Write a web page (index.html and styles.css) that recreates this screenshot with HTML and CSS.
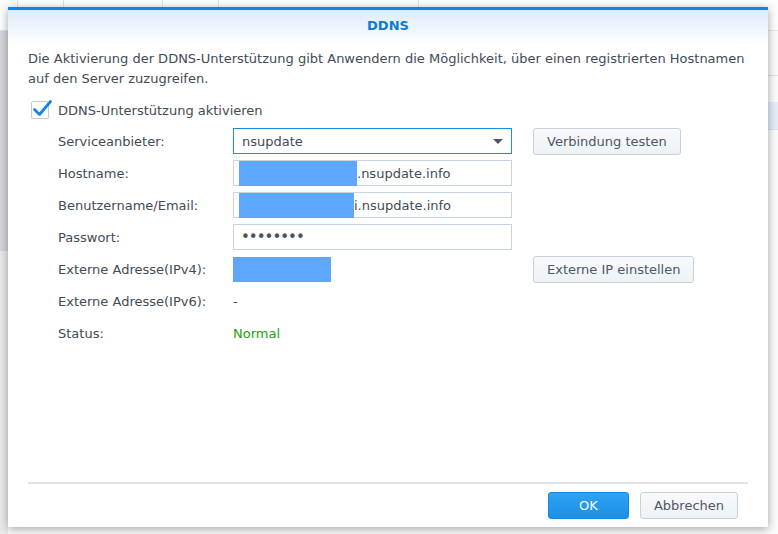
FILE: index.html
```html
<!DOCTYPE html>
<html lang="de">
<head>
<meta charset="utf-8">
<title>DDNS</title>
<link rel="stylesheet" href="styles.css">
</head>
<body>
<div class="backdrop">
  <div class="bg-head">
    <span class="bg-col c1"></span><span class="bg-col c2"></span><span class="bg-col c3"></span><span class="bg-col c4"></span><span class="bg-col c5"></span>
  </div>
  <div class="bg-main">
    <div class="bg-side"></div>
    <div class="bg-content">
      <div class="bg-row r1"></div>
      <div class="bg-row r2"></div>
      <div class="bg-row sel"></div>
    </div>
  </div>
</div>

<div class="dialog">
  <div class="dlg-head">DDNS</div>
  <div class="dlg-body">
    <p class="desc">Die Aktivierung der DDNS-Unterstützung gibt Anwendern die Möglichkeit, über einen registrierten Hostnamen auf den Server zuzugreifen.</p>
    <label class="check-row">
      <span class="checkbox">
        <svg width="22" height="20" viewBox="0 0 22 20"><path d="M3.5 11.5 L8.5 16.5 L19.5 3.5" fill="none" stroke="#1785e0" stroke-width="2.8" stroke-linecap="round" stroke-linejoin="round"/></svg>
      </span>
      <span>DDNS-Unterstützung aktivieren</span>
    </label>
    <div class="form">
      <div class="lbl">Serviceanbieter:</div>
      <div class="field select"><span>nsupdate</span><span class="caret"></span></div>
      <div class="act"><button class="btn">Verbindung testen</button></div>

      <div class="lbl">Hostname:</div>
      <div class="field input"><span class="redact r-host"></span><span>.nsupdate.info</span></div>
      <div class="act"></div>

      <div class="lbl">Benutzername/Email:</div>
      <div class="field input"><span class="redact r-user"></span><span>i.nsupdate.info</span></div>
      <div class="act"></div>

      <div class="lbl">Passwort:</div>
      <div class="field input pw">&#8226;&#8226;&#8226;&#8226;&#8226;&#8226;&#8226;&#8226;</div>
      <div class="act"></div>

      <div class="lbl">Externe Adresse(IPv4):</div>
      <div class="field plain"><span class="redact r-ip"></span></div>
      <div class="act"><button class="btn">Externe IP einstellen</button></div>

      <div class="lbl">Externe Adresse(IPv6):</div>
      <div class="field plain">-</div>
      <div class="act"></div>

      <div class="lbl">Status:</div>
      <div class="field plain ok">Normal</div>
      <div class="act"></div>
    </div>
  </div>
  <div class="dlg-foot">
    <button class="btn primary">OK</button>
    <button class="btn cancel">Abbrechen</button>
  </div>
</div>
</body>
</html>
```
FILE: styles.css
```css
* { box-sizing: border-box; }
html, body { margin: 0; height: 100%; }
body {
  background: #fbfbfc;
  font-family: "DejaVu Sans", Verdana, sans-serif;
  font-size: 13px;
  color: #414b55;
  overflow: hidden;
}

/* background application */
.backdrop { display: flex; flex-direction: column; height: 534px; }
.bg-head {
  height: 31px;
  display: flex;
  background: #fdfdfd;
  border-bottom: 1px solid #e3e6e9;
}
.bg-col { border-right: 1px solid #dfe2e5; height: 100%; }
.c1 { width: 18px; }
.c2 { width: 46px; }
.c3 { width: 99px; }
.c4 { width: 56px; }
.c5 { width: 200px; }
.bg-main { flex: 1; display: flex; }
.bg-side {
  width: 8px;
  background: linear-gradient(#d4d6d9 0, #d4d6d9 220px, #e9eaec 220px);
}
.bg-content { flex: 1; }
.bg-row { height: 45px; border-bottom: 1px solid #dde2e7; }
.bg-row.r2 { height: 26px; border-bottom: none; }
.bg-row.sel { height: 28px; background: #e4eef8; }

/* dialog window */
.dialog {
  position: absolute;
  left: 8px;
  top: 7px;
  width: 760px;
  height: 520px;
  background: #fff;
  border-top: 3px solid #0b86e4;
  box-shadow: 0 2px 9px rgba(0, 0, 0, 0.35);
  display: flex;
  flex-direction: column;
}
.dlg-head {
  height: 35px;
  background: linear-gradient(#dcebfa, #ffffff);
  text-align: center;
  font-weight: bold;
  color: #0c7bd4;
  font-size: 13px;
  line-height: 32px;
}
.dlg-body {
  flex: 1;
  padding: 4px 20px 0 20px;
}
.desc {
  margin: 0;
  line-height: 20px;
}
.check-row {
  display: flex;
  align-items: center;
  gap: 9px;
  height: 20px;
  margin: 11px 0 8px 3px;
}
.checkbox {
  position: relative;
  width: 18px;
  height: 18px;
  border: 1px solid #bfcbd8;
  border-radius: 2px;
  background: #fff;
}
.checkbox svg { position: absolute; left: -1px; top: -4px; }

.form {
  display: grid;
  grid-template-columns: 175px 279px auto;
  grid-auto-rows: 26px;
  row-gap: 6px;
  margin-left: 30px;
}
.lbl { display: flex; align-items: center; }
.field {
  display: flex;
  align-items: center;
  height: 26px;
}
.input, .select {
  border: 1px solid #c9d4df;
  padding-left: 5px;
}
.select {
  border-color: #1d8ce4;
  padding: 0 8px;
  justify-content: space-between;
}
.caret {
  width: 0; height: 0;
  border-left: 5px solid transparent;
  border-right: 5px solid transparent;
  border-top: 5px solid #4d5660;
}
.pw { color: #4a525b; padding-left: 7px; font-size: 15px; letter-spacing: -1px; }
.redact { display: inline-block; background: #5da7ff; }
.r-host { width: 118px; height: 25px; }
.r-user { width: 115px; height: 25px; }
.r-ip { width: 98px; height: 25px; }
.ok { color: #22a30a; }
.act { display: flex; align-items: center; padding-left: 21px; }

.btn {
  font-family: inherit;
  font-size: 13px;
  color: #4d5863;
  height: 27px;
  padding: 0 13px;
  border: 1px solid #c6d1dc;
  border-radius: 3px;
  background: linear-gradient(#f8fafc, #eef2f6);
}

.dlg-foot {
  margin: 0 20px;
  border-top: 2px solid #e1e4e8;
  height: 45px;
  display: flex;
  justify-content: flex-end;
  align-items: flex-start;
  gap: 11px;
  padding: 8px 10px 0 0;
}
.btn.primary {
  width: 81px;
  color: #fff;
  border-color: #1688de;
  background: linear-gradient(#2fa4f4, #1a8fe5);
}
.btn.cancel { width: 98px; padding: 0; }
```
